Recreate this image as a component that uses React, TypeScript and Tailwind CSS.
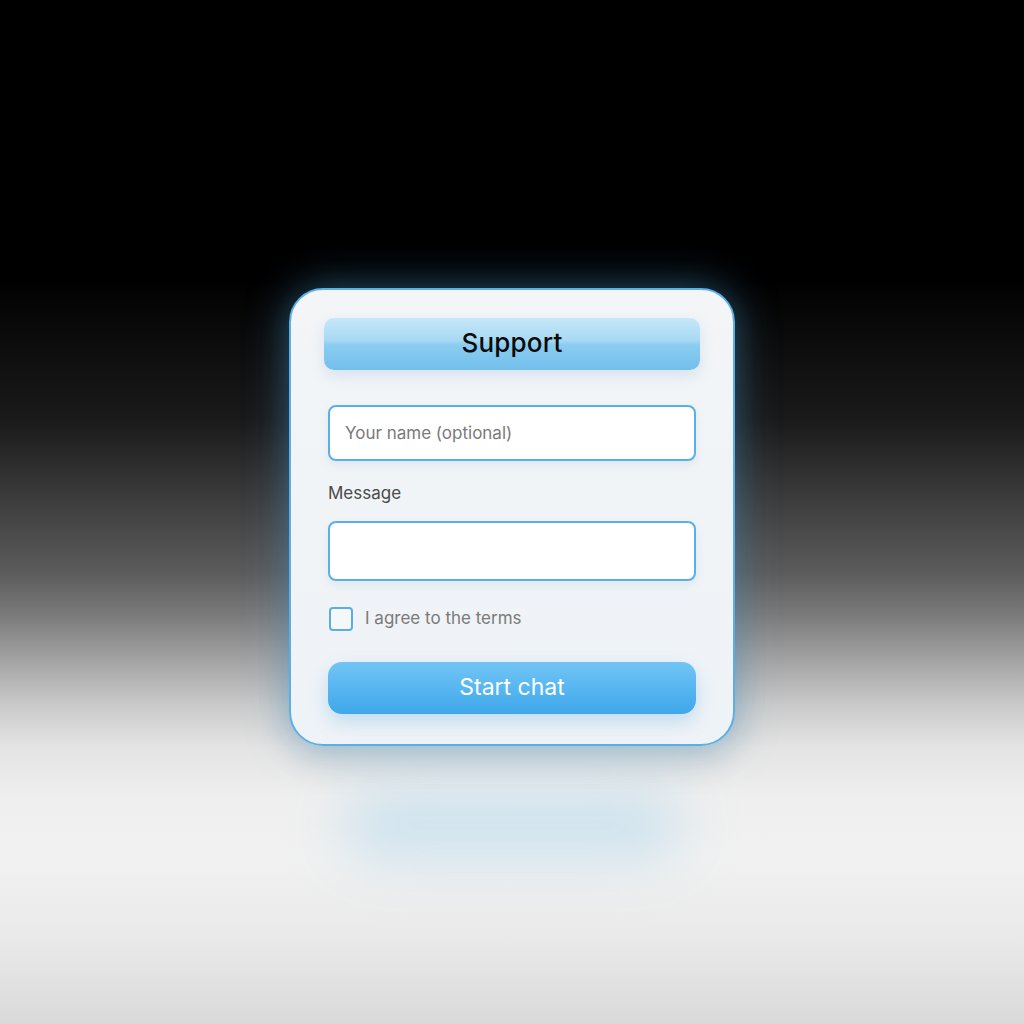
import { useState } from 'react';

export default function App() {
  const [agreed, setAgreed] = useState(false);

  return (
    <div
      className="relative w-full h-[1024px] overflow-hidden flex flex-col items-center pt-[288px] bg-[linear-gradient(to_bottom,#000_0%,#000_27%,#0d0d0d_34%,#1a1a1a_41%,#303030_46%,#464646_51%,#5c5c5c_56%,#7a7a7a_60%,#a8a8a8_65%,#cbcbcb_69%,#e4e4e4_73%,#efefef_78%,#f1f1f1_84%,#e9e9e9_92%,#d9d9d9_100%)]"
      style={{ fontFamily: 'Inter, "Noto Sans", sans-serif' }}
    >
      {/* reflet flou sous la carte */}
      <div className="absolute left-1/2 top-[790px] -translate-x-1/2 w-[340px] h-[70px] rounded-full bg-[#c4dfee] opacity-80 blur-[28px]" />

      <form
        onSubmit={(e) => e.preventDefault()}
        className="relative w-[446px] h-[458px] rounded-[34px] border-2 border-[#5aafe4] bg-[linear-gradient(to_bottom,#f3f5f7,#eef3f7)] px-[33px] pt-[28px] shadow-[0_0_40px_rgba(80,170,225,0.5),0_12px_34px_rgba(0,0,0,0.12)]"
      >
        {/* Titre */}
        <div className="h-[52px] rounded-[10px] flex items-center justify-center bg-[linear-gradient(to_bottom,#c6e7f8_0%,#a9d9f4_42%,#8bccf1_52%,#72bfec_100%)] shadow-[0_6px_14px_rgba(90,150,200,0.18)]">
          <span className="text-[26px] font-[450] text-[#0a0a0a] tracking-[0.2px] -mt-[3px]">Support</span>
        </div>

        <div className="px-1">
          {/* Nom */}
          <input
            type="text"
            placeholder="Your name (optional)"
            className="mt-[35px] w-full h-[56px] rounded-[8px] border-2 border-[#5ab0e6] bg-white px-[15px] text-[17px] text-[#333] placeholder:text-[#7a7a7a] outline-none shadow-[0_4px_10px_rgba(100,140,170,0.12)]"
          />

          {/* Message */}
          <label className="block mt-[22px] text-[17px] text-[#4a4a4a] leading-[20px]">Message</label>
          <textarea
            className="mt-[18px] block w-full h-[60px] resize-none rounded-[8px] border-2 border-[#5ab0e6] bg-white px-[15px] py-[10px] text-[17px] outline-none shadow-[0_4px_10px_rgba(100,140,170,0.12)]"
          />

          {/* Conditions */}
          <label className="mt-[25px] flex items-center gap-[12px] cursor-pointer">
            <span
              onClick={() => setAgreed(!agreed)}
              className="ml-px w-[24px] h-[24px] rounded-[4px] border-2 border-[#5aaee3] bg-[#f4f8fb] flex items-center justify-center"
            >
              {agreed && (
                <svg width="14" height="14" viewBox="0 0 24 24" fill="none" stroke="#3aa5ea" strokeWidth="3">
                  <path d="M5 12l5 5 9-10" />
                </svg>
              )}
            </span>
            <span className="text-[17px] text-[#7a7a7a]">I agree to the terms</span>
          </label>

          {/* Bouton */}
          <button
            type="submit"
            className="mt-[30px] w-full h-[52px] rounded-[14px] bg-[linear-gradient(to_bottom,#72c5f5_0%,#5ab8f1_45%,#3ea7ea_100%)] text-white text-[23px] shadow-[0_8px_18px_rgba(60,150,220,0.25)]"
          >
            Start chat
          </button>
        </div>
      </form>
    </div>
  );
}
